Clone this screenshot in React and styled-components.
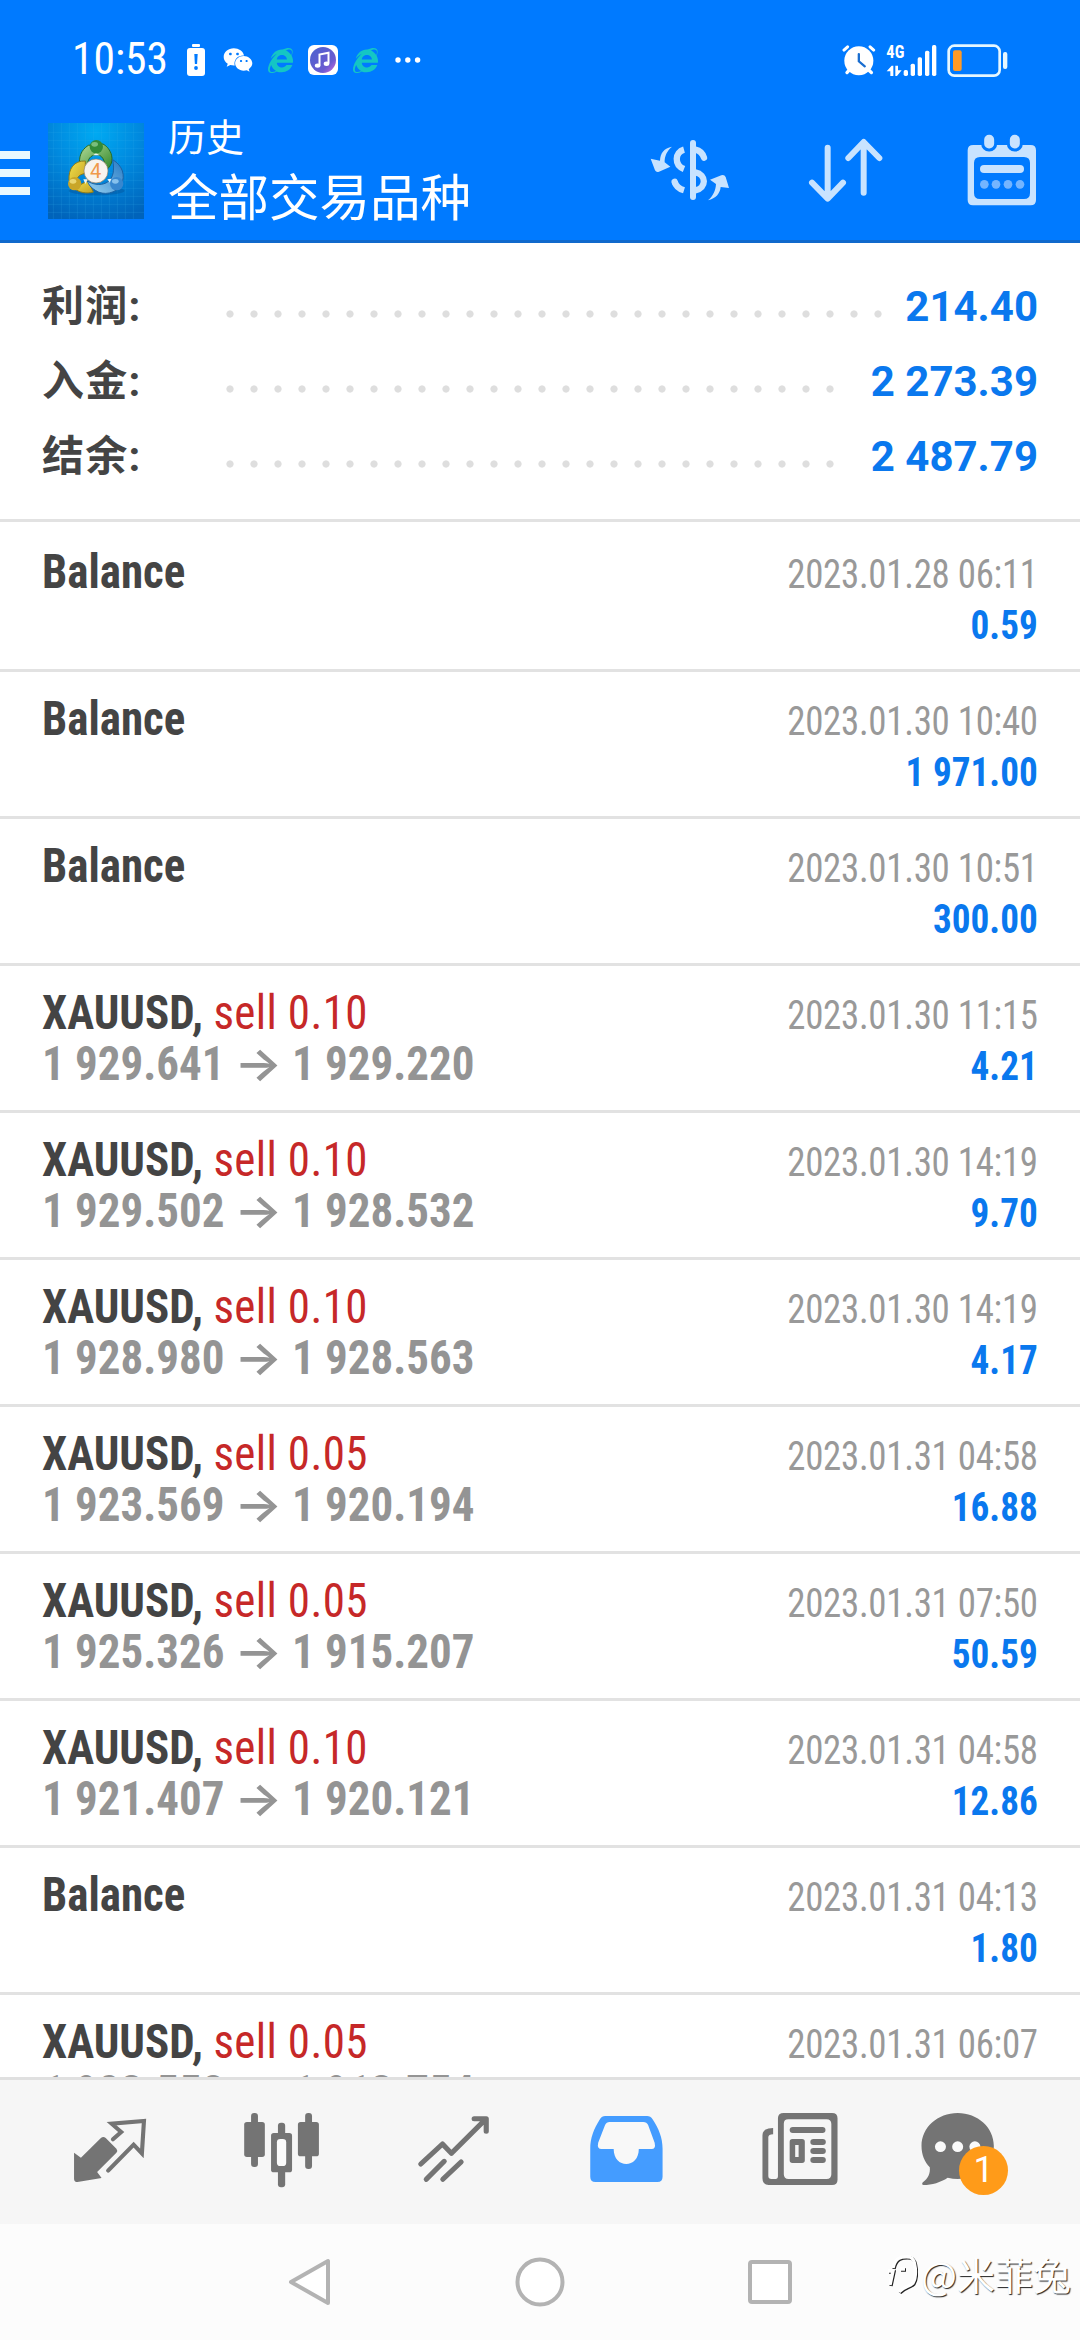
import styled, { createGlobalStyle } from "styled-components";
import { FaInternetExplorer, FaWeixin } from "react-icons/fa";

const GlobalStyle = createGlobalStyle`
  * {
    box-sizing: border-box;
  }

  body {
    margin: 0;
    background: #fff;
    font-family: Roboto, "Noto Sans CJK SC", sans-serif;
  }

  svg {
    display: block;
    flex-shrink: 0;
  }
`;

const Screen = styled.div`
  position: relative;
  display: flex;
  flex-direction: column;
  width: 1080px;
  height: 2340px;
  overflow: hidden;
  background: #fff;
`;

/* header */

const Header = styled.header`
  height: 243px;
  background: #007aff;
  border-bottom: 3px solid #1069cc;
  color: #fff;
`;

const StatusBar = styled.div`
  display: flex;
  align-items: center;
  justify-content: space-between;
  height: 102px;
  padding: 18px 72px 0 72px;
`;

const StatusGroup = styled.div`
  display: flex;
  align-items: center;
  gap: ${(props) => props.$gap}px;
`;

const Clock = styled.span`
  width: 100px;
  font-family: "Roboto Condensed", Roboto, sans-serif;
  font-size: 43.5px;
  line-height: 60px;
  white-space: nowrap;
`;

const Toolbar = styled.div`
  display: flex;
  align-items: center;
  height: 138px;
`;

const MenuButton = styled.div`
  display: grid;
  gap: 10px;
  width: 30px;
  margin: 4px 18px 0 0;
`;

const MenuBar = styled.span`
  height: 8px;
  background: #e9f8ff;
`;

const Titles = styled.div`
  flex: 1;
  margin-left: 24px;
  padding-bottom: 8px;
  font-family: "Noto Sans CJK SC", sans-serif;
`;

const Caption = styled.div`
  height: 55px;
  font-size: 38px;
  line-height: 55px;
`;

const Title = styled.h1`
  height: 66px;
  margin: 0;
  font-size: 50.5px;
  font-weight: 400;
  line-height: 64px;
`;

const Actions = styled.div`
  display: flex;
  align-items: center;
  gap: 78px;
  padding: 0 43px 2px 0;
`;

/* account summary */

const Summary = styled.section`
  height: 279px;
  padding: 26px 42px 0;
  border-bottom: 3px solid #e2e2e2;
`;

const SummaryRow = styled.div`
  display: flex;
  align-items: baseline;
  height: 75px;
  font-size: 42px;
  font-weight: 700;
  line-height: 75px;
`;

const SummaryLabel = styled.span`
  width: 176px;
  color: #444;
  letter-spacing: 1.2px;
`;

const Leader = styled.span`
  align-self: stretch;
  width: ${(props) => props.$dots * 24}px;
  background: radial-gradient(circle at 12px 45px, #dedede 3.2px, transparent 4px) 0 0 / 24px 75px;
`;

const SummaryValue = styled.span`
  margin-left: auto;
  color: #0a78ee;
`;

/* deals */

const List = styled.main`
  height: 1555px;
  overflow: hidden;
`;

const Item = styled.div`
  display: flex;
  justify-content: space-between;
  height: 147px;
  padding: 21px 42px 0;
  border-top: 3px solid #e2e2e2;
  font-family: "Roboto Condensed", Roboto, sans-serif;
  line-height: 51px;
  white-space: nowrap;

  &:first-child {
    border-color: transparent;
  }
`;

const Deal = styled.div`
  font-size: 48px;
  font-weight: 700;
  transform: scaleX(0.937);
  transform-origin: left;
`;

const Symbol = styled.div`
  height: 51px;
  color: #444;
`;

const Volume = styled.span`
  color: #c62828;
  font-weight: 400;
  letter-spacing: 0.4px;
`;

const Prices = styled.div`
  height: 51px;
  color: #949494;
`;

const Arrow = styled.span`
  display: inline-block;
  margin: 0 3px;
  font-family: Inter, sans-serif;
  font-size: 46px;
  font-weight: 600;
  line-height: 40px;
  transform: scaleX(1.17);
`;

const Result = styled.div`
  margin-top: 3px;
  font-size: 40px;
  text-align: right;
`;

const Time = styled.div`
  height: 51px;
  color: #999;
  letter-spacing: -0.3px;
  transform: scaleX(0.922);
  transform-origin: right;
`;

const Profit = styled.div`
  height: 51px;
  color: #0a78ee;
  font-weight: 700;
  transform: scaleX(0.93);
  transform-origin: right;
`;

/* bottom bars */

const TabBar = styled.nav`
  display: grid;
  grid-template-columns: repeat(6, 172px);
  place-content: center;
  justify-items: center;
  height: 147px;
  background: #f6f6f6;
  border-top: 3px solid #e0e0e0;
`;

const Tab = styled.div`
  position: relative;
  color: ${(props) => (props.$active ? "#449cff" : "#747474")};
`;

const Badge = styled.span`
  position: absolute;
  top: 48px;
  left: 43px;
  width: 49px;
  height: 49px;
  border-radius: 50%;
  background: #ff9b19;
  color: #fff;
  font-size: 36px;
  line-height: 49px;
  text-align: center;
`;

const SystemBar = styled.footer`
  display: grid;
  grid-template-columns: repeat(3, 229.5px);
  place-content: center;
  justify-items: center;
  height: 116px;
  background: #fcfcfc;
`;

const Watermark = styled.div`
  position: absolute;
  right: 9px;
  bottom: 39px;
  display: flex;
  align-items: center;
  gap: 3px;
  color: #fff;
  font-family: "Noto Sans CJK SC", sans-serif;
  font-size: 38px;
  line-height: 54px;
  text-shadow: 1px 1px 1px #222;
`;

const summary = [
  { label: "利润:", value: "214.40", dots: 28 },
  { label: "入金:", value: "2 273.39", dots: 26 },
  { label: "结余:", value: "2 487.79", dots: 26 },
];

const deals = [
  { time: "2023.01.28 06:11", profit: "0.59" },
  { time: "2023.01.30 10:40", profit: "1 971.00" },
  { time: "2023.01.30 10:51", profit: "300.00" },
  { volume: "0.10", open: "1 929.641", close: "1 929.220", time: "2023.01.30 11:15", profit: "4.21" },
  { volume: "0.10", open: "1 929.502", close: "1 928.532", time: "2023.01.30 14:19", profit: "9.70" },
  { volume: "0.10", open: "1 928.980", close: "1 928.563", time: "2023.01.30 14:19", profit: "4.17" },
  { volume: "0.05", open: "1 923.569", close: "1 920.194", time: "2023.01.31 04:58", profit: "16.88" },
  { volume: "0.05", open: "1 925.326", close: "1 915.207", time: "2023.01.31 07:50", profit: "50.59" },
  { volume: "0.10", open: "1 921.407", close: "1 920.121", time: "2023.01.31 04:58", profit: "12.86" },
  { time: "2023.01.31 04:13", profit: "1.80" },
  { volume: "0.05", open: "1 923.558", close: "1 913.754", time: "2023.01.31 06:07" },
];

function LowBatteryIcon() {
  return (
    <svg width="21" height="32" viewBox="0 0 21 32" fill="#fff">
      <rect x="5" y="0" width="8" height="3" rx="1" />
      <rect x="0" y="4" width="18" height="28" rx="3" />
      <path d="M7.3 10h3.4l-.6 10H7.9z" fill="#007aff" />
      <circle cx="9" cy="24" r="1.9" fill="#007aff" />
    </svg>
  );
}

function MusicIcon() {
  return (
    <svg width="30" height="30" viewBox="0 0 30 30">
      <defs>
        <linearGradient id="music" x1="0" y1="0" x2="1" y2="1">
          <stop offset="0" stopColor="#4a62cf" />
          <stop offset="0.7" stopColor="#6b5bd0" />
          <stop offset="1" stopColor="#d66be0" />
        </linearGradient>
      </defs>
      <rect width="30" height="30" rx="6" fill="#fff" />
      <circle cx="15" cy="15" r="13" fill="url(#music)" />
      <path d="M11.5 20.5V9.5l9-1.8v10.8" fill="none" stroke="#fff" strokeWidth="2" />
      <ellipse cx="9.6" cy="20.6" rx="2.8" ry="2.2" fill="#fff" />
      <ellipse cx="18.5" cy="18.8" rx="2.8" ry="2.2" fill="#fff" />
    </svg>
  );
}

function MoreIcon() {
  return (
    <svg width="28" height="6" viewBox="-2 0 28 6" fill="#fff">
      <circle cx="3" cy="3" r="2.7" />
      <circle cx="12.8" cy="3" r="2.7" />
      <circle cx="22.6" cy="3" r="2.7" />
    </svg>
  );
}

function AlarmIcon() {
  return (
    <svg width="34" height="32" viewBox="723 69 103 96" fill="none" stroke="#fff" strokeLinecap="round">
      <circle cx="774" cy="119" r="44" fill="#fff" stroke="none" />
      <path d="M729 87l11-10M819 87l-11-10" strokeWidth="9" />
      <path d="M746 146l-8 9M802 146l10 9" strokeWidth="10" />
      <path d="M774 99v22l18 15" stroke="#1a6ed0" strokeWidth="7" />
    </svg>
  );
}

function SignalIcon() {
  return (
    <svg width="51" height="33" viewBox="855 67 153 99" overflow="visible">
      <text x="856" y="109" fill="#fff" fontSize="53" fontWeight="700" fontFamily="Roboto Condensed" textLength="54" lengthAdjust="spacingAndGlyphs">
        4G
      </text>
      <g fill="#fff">
        <path d="M857 149l15-17h5v31h-9v-14zM883 132h8v14h11l-14 17h-5z" />
        <rect x="908" y="145" width="13" height="18" rx="5" />
        <rect x="929" y="126" width="13" height="37" rx="5" />
        <rect x="950" y="107" width="13" height="56" rx="5" />
        <rect x="972" y="87" width="13" height="76" rx="5" />
        <rect x="993" y="70" width="13" height="93" rx="5" />
      </g>
    </svg>
  );
}

function BatteryIcon() {
  return (
    <svg width="61" height="33" viewBox="1041 69 183 99">
      <rect x="1046" y="74" width="153" height="90" rx="17" fill="none" stroke="#e6f7ff" strokeWidth="8" />
      <rect x="1059" y="88" width="26" height="62" rx="6" fill="#ff9a26" />
      <rect x="1209" y="93" width="13" height="51" rx="6" fill="#e6f7ff" />
    </svg>
  );
}

function Logo() {
  return (
    <svg width="96" height="96" viewBox="144 99 288 288">
      <defs>
        <radialGradient id="sky" cx="0.5" cy="0.1" r="0.95">
          <stop offset="0" stopColor="#00aaf2" />
          <stop offset="0.45" stopColor="#008be0" />
          <stop offset="1" stopColor="#0063ba" />
        </radialGradient>
        <linearGradient id="green" x1="0" y1="0" x2="1" y2="1">
          <stop offset="0" stopColor="#b4dc9a" />
          <stop offset="1" stopColor="#2d8426" />
        </linearGradient>
        <linearGradient id="yellow" x1="0" y1="0" x2="1" y2="1">
          <stop offset="0" stopColor="#f2e04a" />
          <stop offset="1" stopColor="#c3a024" />
        </linearGradient>
        <linearGradient id="blue" x1="1" y1="0" x2="0" y2="1">
          <stop offset="0" stopColor="#2679c4" />
          <stop offset="1" stopColor="#96d2f2" />
        </linearGradient>
      </defs>
      <rect x="144" y="99" width="288" height="288" fill="url(#sky)" />
      <path
        d="M160 99v288M184 99v288M208 99v288M232 99v288M256 99v288M280 99v288M304 99v288M328 99v288M352 99v288M376 99v288M400 99v288M144 127h288M144 151h288M144 175h288M144 199h288M144 223h288M144 247h288M144 271h288M144 295h288M144 319h288M144 343h288M144 367h288"
        stroke="#35b4ee"
        strokeOpacity="0.28"
        strokeWidth="2"
      />
      <ellipse cx="290" cy="302" rx="84" ry="14" fill="#034a8c" opacity="0.35" />
      <g strokeWidth="3">
        <path d="M265 166c-22 14-30 36-25 62l23-4c0-16 8-28 25-30 19 0 28 16 27 48 20-12 25-32 18-52-7-16-14-22-24-28z" fill="url(#green)" stroke="#246b25" />
        <path d="M256 213c-34-2-51 24-49 57l22 22c-4-26 5-38 27-42z" fill="url(#yellow)" stroke="#8f7c18" />
        <path d="M222 294c14 14 38 18 58 12l-16-34-26 14z" fill="url(#yellow)" stroke="#8f7c18" />
        <path d="M338 209c30 18 39 48 26 74-14 28-55 35-78 18-14-9-20-17-24-28 22 14 48 13 62 2 16-12 20-34 14-66z" fill="url(#blue)" stroke="#1c62a4" />
      </g>
      <path d="M250 268l14 0-8 14zM322 268l12-2-4 12zM278 196l10-6 12 6z" fill="#eef6f4" />
      <circle cx="289" cy="170" r="20" fill="#338b38" />
      <ellipse cx="284" cy="163" rx="10" ry="7" fill="#8bc98c" opacity="0.8" />
      <circle cx="224" cy="281" r="20" fill="#c9a628" />
      <ellipse cx="219" cy="274" rx="10" ry="7" fill="#f3e283" opacity="0.8" />
      <circle cx="350" cy="281" r="20" fill="#3787cf" />
      <ellipse cx="346" cy="274" rx="10" ry="7" fill="#9ad0f4" opacity="0.8" />
      <circle cx="288" cy="243" r="36" fill="#f7f3ee" stroke="#8c7b60" strokeWidth="2" />
      <text x="287" y="263" textAnchor="middle" fontSize="60" fontWeight="400" fontFamily="Roboto" fill="#f09a4c">
        4
      </text>
    </svg>
  );
}

function CurrencyIcon() {
  return (
    <svg width="80" height="62" viewBox="150 354 240 186" fill="none" stroke="#c8e3ff" strokeWidth="19">
      <path d="M252 386c-28 8-30 46 0 58" />
      <path d="M279 366v162" strokeWidth="18" strokeLinecap="round" />
      <path d="M286 386c14 3 22 11 26 24" strokeLinecap="round" />
      <path d="M286 454c34 6 34 48 0 54" />
      <path d="M224 482c3 12 12 21 28 26" />
      <path d="M224 482l1 3" strokeLinecap="round" />
      <path
        d="M216 377C192 381 181 396 180 419l-28-6 13 35q4 7 12 4l34-15-17-13c-1-18 7-35 22-47zM324 538c24-6 36-20 38-40l25 3-10-33q-4-8-13-5l-34 13 18 13c-1 20-9 36-24 49z"
        fill="#c8e3ff"
        stroke="none"
      />
    </svg>
  );
}

function SortIcon() {
  return (
    <svg width="81" height="66" viewBox="625 352 243 198" fill="none" stroke="#c8e3ff" strokeWidth="18" strokeLinecap="round" strokeLinejoin="round">
      <path d="M684 384v150M637 489l47 48 46-48" />
      <path d="M792 519V370M746 415l46-48 47 48" />
    </svg>
  );
}

function CalendarIcon() {
  return (
    <svg width="70" height="72" viewBox="1101 342 210 216">
      <path
        d="M1120 375h172q16 0 16 16v149q0 16-16 16h-173q-16 0-16-16V391q0-16 17-16zm20 36q-18 0-18 18v90q0 18 18 18h132q18 0 18-18v-90q0-18-18-18z"
        fill="#c8e3ff"
        fillRule="evenodd"
      />
      <g fill="#c8e3ff" stroke="#007aff" strokeWidth="9">
        <rect x="1148" y="340" width="39" height="50" rx="19" />
        <rect x="1225" y="340" width="39" height="50" rx="19" />
      </g>
      <rect x="1140" y="435" width="132" height="24" rx="12" fill="#c8e3ff" />
      <g fill="#74b5ff">
        <circle cx="1153" cy="493" r="13" />
        <circle cx="1188" cy="493" r="13" />
        <circle cx="1224" cy="493" r="13" />
        <circle cx="1260" cy="493" r="13" />
      </g>
    </svg>
  );
}

function TabIcon({ x, children }) {
  return (
    <svg width="108" height="108" viewBox={`${x} 354 313.6 324`} preserveAspectRatio="none" fill="currentColor">
      {children}
    </svg>
  );
}

function QuotesIcon() {
  return (
    <TabIcon x={162.6}>
      <path d="M215 518l20 15 58-59q7-6 14 0l31 32q5 6 0 12l-56 58 13 18-70 12q-10 0-10-10z" />
      <path
        d="M328 478l24-22-28-25 94-8-6 97-24-26-74 78"
        fill="none"
        stroke="currentColor"
        strokeWidth="12"
        strokeLinecap="round"
      />
    </TabIcon>
  );
}

function CandlesIcon() {
  return (
    <TabIcon x={662}>
      <rect x="729" y="399" width="20" height="162" rx="9" />
      <rect x="709" y="426" width="60" height="105" rx="8" />
      <rect x="886" y="399" width="20" height="168" rx="9" />
      <rect x="865" y="426" width="61" height="103" rx="8" />
      <rect x="807" y="428" width="21" height="194" rx="9" />
      <rect x="787" y="459" width="61" height="118" rx="8" />
      <rect x="804" y="477" width="27" height="81" rx="10" fill="#fafafa" />
    </TabIcon>
  );
}

function TrendIcon() {
  return (
    <TabIcon x={1161.6}>
      <g fill="none" stroke="currentColor" strokeWidth="15" strokeLinecap="round" strokeLinejoin="round">
        <path d="M1222 552l63-60 26 28 97-100M1377 416h35v38" />
        <path d="M1238 598l52-54M1286 598l53-52" />
      </g>
    </TabIcon>
  );
}

function InboxIcon() {
  return (
    <TabIcon x={93}>
      <path d="M189 408h122q10 0 16 10c18 28 29 56 29 88v84q0 16-15 16H161q-15 0-15-16v-84c0-32 10-58 28-88q6-10 15-10z" />
      <path d="M202 426h98q10 0 14 9l19 53q4 19-9 19h-37c0 60-73 60-73 0h-35q-14 0-10-19l20-53q4-9 13-9z" fill="#f8f8f8" />
    </TabIcon>
  );
}

function NewsIcon() {
  return (
    <TabIcon x={592.4}>
      <path
        d="M708 399h140q16 0 16 16v184q0 16-16 16H664q-18 0-18-20V466q0-22 31-22v19q-14 0-14 9v116q0 9 9 9h12q7 0 7-9V415q0-16 17-16zm13 19q-13 0-13 13v152q0 14 14 14h110q14 0 14-14V432q0-14-14-14z"
        fillRule="evenodd"
      />
      <rect x="725" y="441" width="104" height="18" rx="9" />
      <path d="M733 477h28q8 0 8 8v56q0 8-8 8h-28q-8 0-8-8v-56q0-8 8-8zm8 18v36h10v-36z" fillRule="evenodd" />
      <rect x="785" y="477" width="45" height="18" rx="9" />
      <rect x="785" y="504" width="45" height="18" rx="9" />
      <rect x="785" y="531" width="45" height="18" rx="9" />
    </TabIcon>
  );
}

function ChatIcon() {
  return (
    <TabIcon x={1092}>
      <path d="M1213 399c58 0 105 43 105 99s-47 99-105 99q-14 0-29-4c-20 14-46 22-70 22-5 0-5-5-2-8 15-11 22-26 20-45-15-16-24-38-24-64 0-56 47-99 105-99z" />
      <g fill="#fafafa">
        <circle cx="1163" cy="500" r="16" />
        <circle cx="1213" cy="500" r="16" />
        <circle cx="1263" cy="500" r="16" />
      </g>
    </TabIcon>
  );
}

function SystemIcon({ children }) {
  return (
    <svg width="52" height="52" viewBox="0 0 52 52" fill="#fff" stroke="#b3b3b3" strokeWidth="4" strokeLinejoin="round">
      {children}
    </svg>
  );
}

function WatermarkIcon() {
  return (
    <svg width="34" height="44" viewBox="0 0 34 44" fill="none">
      <path d="M7 34l3-14H5M10 17C12 7 18 5 27 6c6 2 7 19 3 26-4 4-9 3-14 9M17 18h5" stroke="#222" strokeWidth="3.4" />
      <path d="M6 33l3-14H4M9 16C11 6 17 4 26 5c6 2 7 19 3 26-4 4-9 3-14 9M16 17h5" stroke="#fff" strokeWidth="3.4" />
    </svg>
  );
}

function DealRow({ deal }) {
  return (
    <Item>
      <Deal>
        {deal.volume ? (
          <>
            <Symbol>
              XAUUSD, <Volume>sell {deal.volume}</Volume>
            </Symbol>
            <Prices>
              {deal.open} <Arrow>→</Arrow> {deal.close}
            </Prices>
          </>
        ) : (
          <Symbol>Balance</Symbol>
        )}
      </Deal>
      <Result>
        <Time>{deal.time}</Time>
        {deal.profit && <Profit>{deal.profit}</Profit>}
      </Result>
    </Item>
  );
}

function App() {
  return (
    <Screen>
      <GlobalStyle />
      <Header>
        <StatusBar>
          <StatusGroup $gap={15}>
            <Clock>10:53</Clock>
            <LowBatteryIcon />
            <FaWeixin size={30} />
            <FaInternetExplorer size={25} color="#14c6c4" />
            <MusicIcon />
            <FaInternetExplorer size={25} color="#14c6c4" />
            <MoreIcon />
          </StatusGroup>
          <StatusGroup $gap={10}>
            <AlarmIcon />
            <SignalIcon />
            <BatteryIcon />
          </StatusGroup>
        </StatusBar>
        <Toolbar>
          <MenuButton>
            <MenuBar />
            <MenuBar />
            <MenuBar />
          </MenuButton>
          <Logo />
          <Titles>
            <Caption>历史</Caption>
            <Title>全部交易品种</Title>
          </Titles>
          <Actions>
            <CurrencyIcon />
            <SortIcon />
            <CalendarIcon />
          </Actions>
        </Toolbar>
      </Header>

      <Summary>
        {summary.map((row) => (
          <SummaryRow key={row.label}>
            <SummaryLabel>{row.label}</SummaryLabel>
            <Leader $dots={row.dots} />
            <SummaryValue>{row.value}</SummaryValue>
          </SummaryRow>
        ))}
      </Summary>

      <List>
        {deals.map((deal, index) => (
          <DealRow key={index} deal={deal} />
        ))}
      </List>

      <TabBar>
        <Tab>
          <QuotesIcon />
        </Tab>
        <Tab>
          <CandlesIcon />
        </Tab>
        <Tab>
          <TrendIcon />
        </Tab>
        <Tab $active>
          <InboxIcon />
        </Tab>
        <Tab>
          <NewsIcon />
        </Tab>
        <Tab>
          <ChatIcon />
          <Badge>1</Badge>
        </Tab>
      </TabBar>

      <SystemBar>
        <SystemIcon>
          <path d="M6 26L43 5v42z" />
        </SystemIcon>
        <SystemIcon>
          <circle cx="26" cy="26" r="22.5" />
        </SystemIcon>
        <SystemIcon>
          <rect x="6" y="6" width="40" height="40" rx="2" />
        </SystemIcon>
      </SystemBar>

      <Watermark>
        <WatermarkIcon />
        @米菲兔
      </Watermark>
    </Screen>
  );
}

export default App;
